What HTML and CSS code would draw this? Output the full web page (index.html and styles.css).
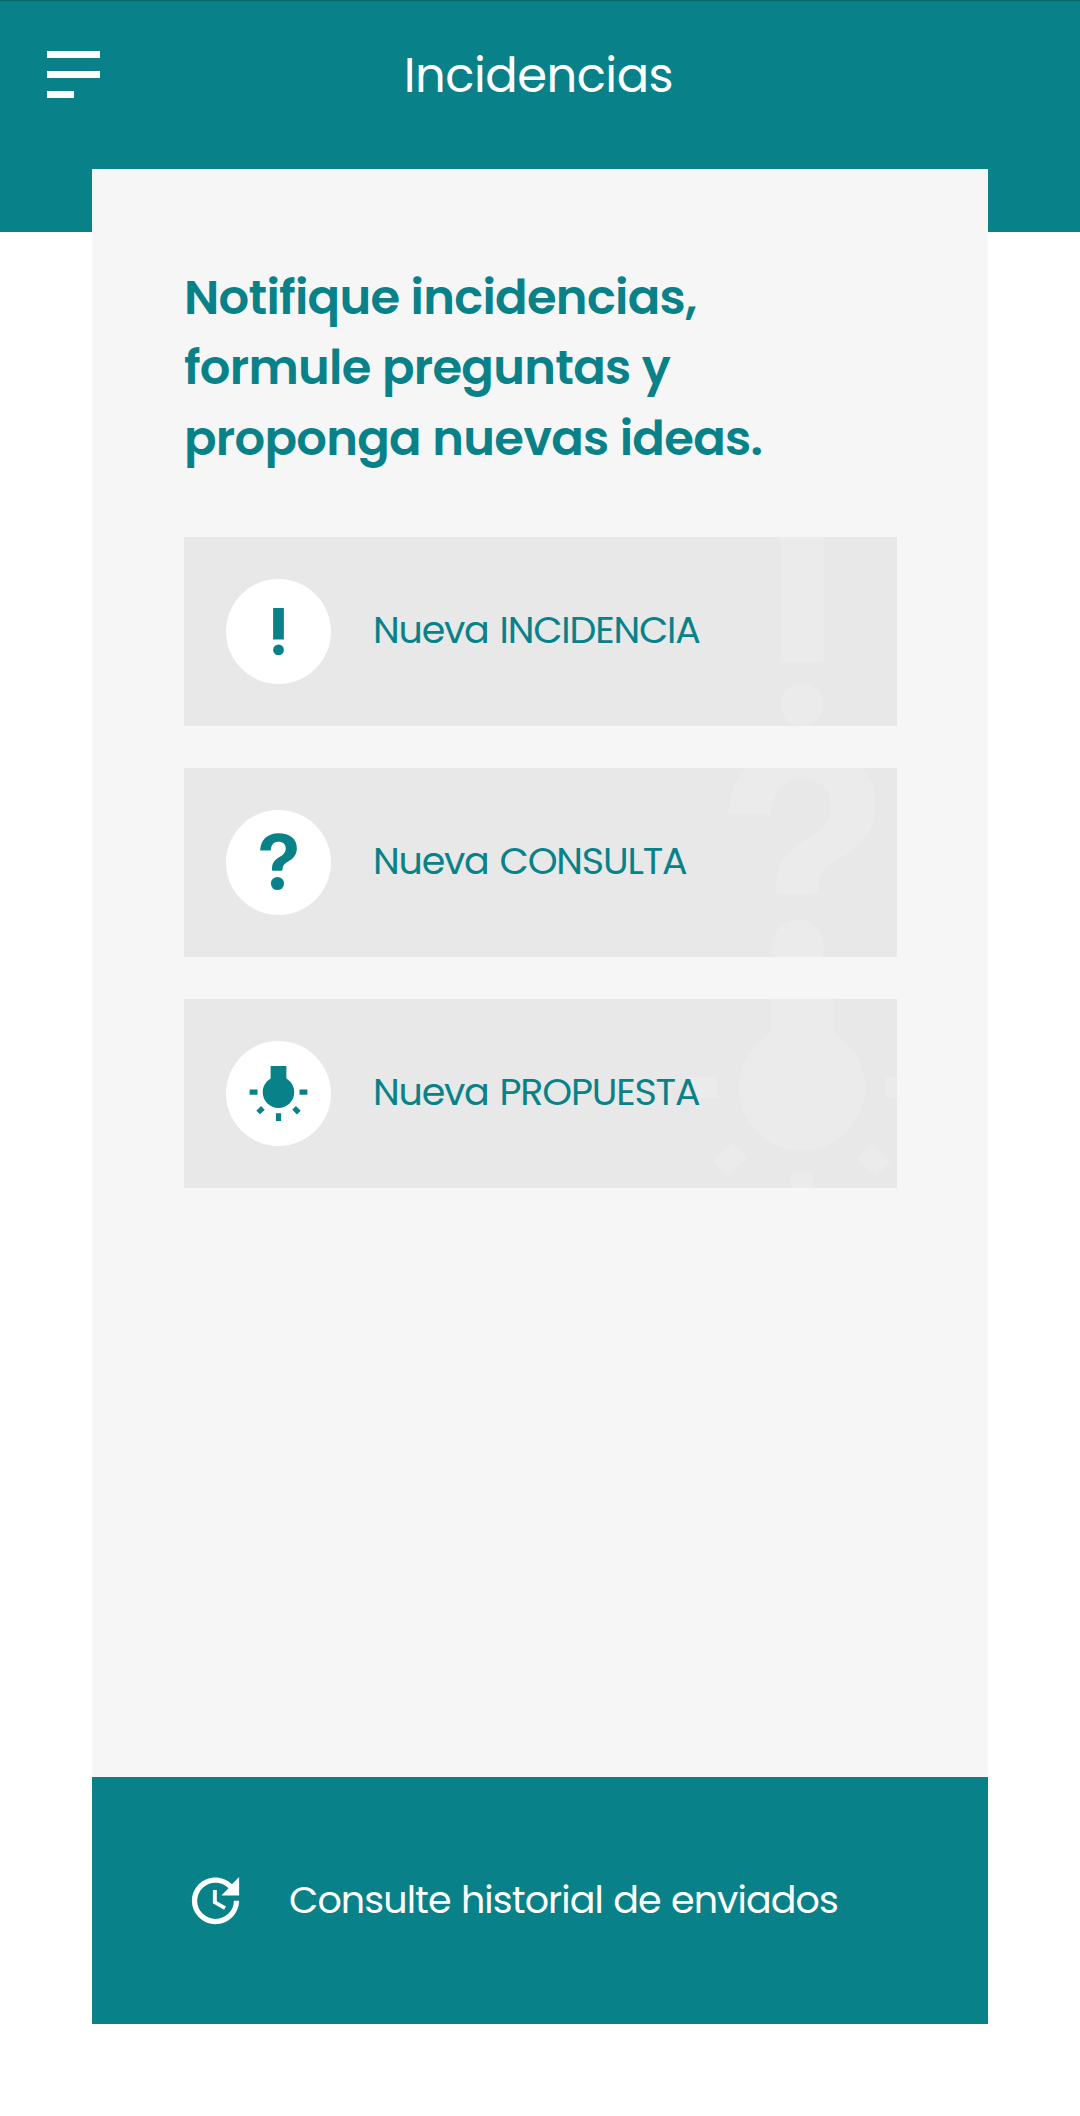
FILE: index.html
```html
<!DOCTYPE html>
<html lang="es">
<head>
    <meta charset="UTF-8">
    <meta name="viewport" content="width=device-width, initial-scale=1.0">
    <title>Incidencias</title>
    <link rel="stylesheet" href="styles.css">
</head>
<body>
    <!-- Iconos compartidos -->
    <svg class="sprite" aria-hidden="true">
        <symbol id="icon-exclamation" viewBox="0 0 24 24">
            <path d="M9.95 3h4.1v12h-4.1z"/>
            <circle cx="12" cy="19" r="2.05"/>
        </symbol>
        <symbol id="icon-question" viewBox="0 0 24 24">
            <path d="M5 7.45C5.2 3.4 7.8.9 12 .9c4.3 0 7 2.1 7 5.7 0 1.7-.6 2.9-1.8 3.95-.8.7-1.7 1.1-2.4 1.6-.9.7-1.2 1.2-1.25 2.4-.02.4-.1.55-.4.55H9.7c-.15 0-.2-.1-.2-.3.05-1.7.2-2.7 1.36-3.8.8-.8 1.8-1.3 2.69-1.9.8-.6 1.21-1.4 1.21-2.4 0-1.6-1-2.6-2.79-2.6S9.15 5.3 9.05 7.45z"/>
            <circle cx="11.6" cy="20" r="2.5"/>
        </symbol>
        <symbol id="icon-bulb" viewBox="0 0 24 24">
            <path d="M3.55 18.54l1.41 1.41 1.8-1.79-1.41-1.41-1.8 1.79zM11 22.45h2V19.5h-2v2.95zM4 10.5H1v2h3v-2zm11-4.19V1.5H9v4.81C7.21 7.35 6 9.28 6 11.5c0 3.31 2.69 6 6 6s6-2.69 6-6c0-2.22-1.21-4.15-3-5.19zm5 4.19v2h3v-2h-3zm-2.76 7.66l1.79 1.8 1.41-1.41-1.8-1.79-1.4 1.4z"/>
        </symbol>
    </svg>

    <header class="header">
        <button class="menu" aria-label="Menú">
            <span></span>
            <span></span>
            <span class="short"></span>
        </button>
        <h1>Incidencias</h1>
    </header>

    <main class="card">
        <section class="content">
            <h2>Notifique incidencias,<br>formule preguntas y<br>proponga nuevas ideas.</h2>

            <div class="options">
                <a class="option">
                    <svg class="ghost"><use href="#icon-exclamation"/></svg>
                    <span class="circle"><svg><use href="#icon-exclamation"/></svg></span>
                    <span class="label">Nueva INCIDENCIA</span>
                </a>
                <a class="option">
                    <svg class="ghost"><use href="#icon-question"/></svg>
                    <span class="circle"><svg><use href="#icon-question"/></svg></span>
                    <span class="label">Nueva CONSULTA</span>
                </a>
                <a class="option">
                    <svg class="ghost"><use href="#icon-bulb"/></svg>
                    <span class="circle"><svg><use href="#icon-bulb"/></svg></span>
                    <span class="label">Nueva PROPUESTA</span>
                </a>
            </div>
        </section>

        <footer class="history">
            <svg viewBox="0 0 24 24">
                <path d="M21 10.12h-6.78l2.74-2.82c-2.73-2.7-7.15-2.8-9.88-.1-2.73 2.71-2.73 7.08 0 9.79s7.15 2.71 9.88 0C18.32 15.65 19 14.08 19 12.1h2c0 1.98-.88 4.55-2.64 6.29-3.51 3.48-9.21 3.48-12.72 0-3.5-3.47-3.53-9.11-.02-12.58s9.14-3.47 12.65 0L21 3v7.12zM11 8h1.5v4.25l3.5 2.08-.72 1.21L11 13V8z"/>
            </svg>
            <span class="history-text">Consulte historial de enviados</span>
        </footer>
    </main>
</body>
</html>
```
FILE: styles.css
```css
* {
    margin: 0;
    padding: 0;
    box-sizing: border-box;
}

body {
    font-family: Poppins, Inter, sans-serif;
    background: #fff;
    color: #088288;
}

.sprite {
    display: none;
}

.header {
    display: flex;
    align-items: flex-start;
    height: 232px;
    padding: 50px 47px 0;
    background: #088288;
    border-top: 1px solid #06666c;
    color: #fff;
}

.menu {
    display: flex;
    flex-direction: column;
    gap: 13px;
    width: 53px;
    background: none;
    border: none;
}

.menu span {
    height: 7px;
    background: #fff;
}

.menu .short {
    width: 27px;
}

.header h1 {
    flex: 1;
    margin-right: 56px;
    text-align: center;
    font-size: 48px;
    font-weight: 400;
    line-height: 50px;
    letter-spacing: -0.5px;
}

.card {
    display: flex;
    flex-direction: column;
    width: 896px;
    height: 1855px;
    margin: -63px auto 0;
    background: #f6f6f6;
}

.content {
    flex: 1;
    padding: 94px 91.5px 0 92px;
}

.content h2 {
    margin-bottom: 63px;
    font-size: 48px;
    font-weight: 600;
    line-height: 70.3px;
    letter-spacing: -0.7px;
    word-spacing: 0.5px;
    white-space: nowrap;
}

.options {
    display: flex;
    flex-direction: column;
    gap: 42px;
}

.option {
    position: relative;
    display: flex;
    align-items: center;
    gap: 42px;
    height: 189px;
    padding-left: 42px;
    overflow: hidden;
    background: #e8e8e8;
}

/* Icono grande de fondo */
.ghost {
    position: absolute;
    top: -31.5px;
    right: -31.5px;
    width: 252px;
    height: 252px;
    fill: #ebebeb;
}

.circle {
    display: flex;
    align-items: center;
    justify-content: center;
    width: 105px;
    height: 105px;
    border-radius: 50%;
    background: #fff;
}

.circle svg {
    width: 63px;
    height: 63px;
    fill: #088288;
}

.label {
    z-index: 1;
    padding-bottom: 4px;
    font-size: 38px;
    letter-spacing: -1.2px;
    word-spacing: 2px;
    white-space: nowrap;
}

.history {
    display: flex;
    align-items: center;
    gap: 42px;
    height: 247px;
    padding-left: 92px;
    background: #088288;
    color: #fff;
}

.history svg {
    width: 63px;
    height: 63px;
    fill: #fff;
}

.history-text {
    padding-bottom: 2px;
    font-size: 38px;
    letter-spacing: -0.9px;
    word-spacing: 1px;
    white-space: nowrap;
}
```
